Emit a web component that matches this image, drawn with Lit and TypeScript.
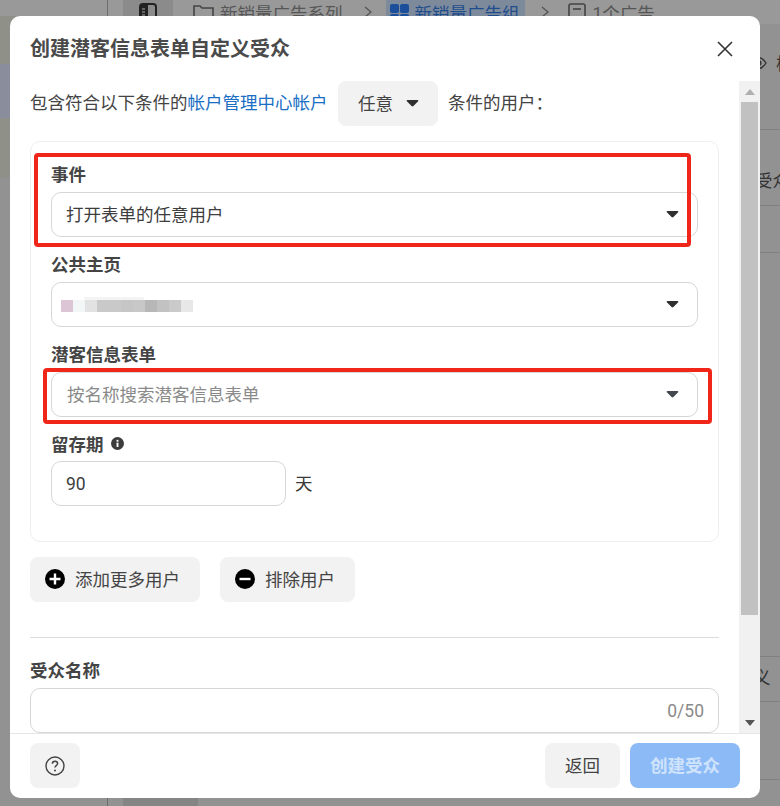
import { LitElement, css, html, svg } from "lit";
import { customElement } from "lit/decorators.js";

// 打码区域的色块（公共主页名称）
const BLUR_CELLS = ["#dcc6d6", "#f3f6f7", "#e2e2e2", "#c9c9c9", "#c9c9c9", "#c6c6c6", "#c8c8c8", "#b7b7b7", "#c2c2c2", "#cacaca", "#e8e8e8"];

const caret = (color = "#333") => html`
  <svg class="caret" width="13" height="8.4" viewBox="0 0 14 9">
    <path d="M1.6 1h10.8c.8 0 1.2.9.7 1.5L8 7.6c-.6.6-1.4.6-2 0L.9 2.5C.4 1.9.8 1 1.6 1z" fill=${color}></path>
  </svg>
`;

const folderIcon = svg`<path d="M1 17V3h6l2 2h11v12" fill="none" stroke="#444" stroke-width="1.6"></path>`;

const chevron = html`
  <svg class="chevron" width="8" height="12" viewBox="0 0 8 12">
    <path d="M1 1l6 5-6 5" fill="none" stroke="#555" stroke-width="1.3"></path>
  </svg>
`;

@customElement("app-root")
export class AppRoot extends LitElement {
  static styles = css`
    :host {
      display: block;
      font-family: Roboto, "Noto Sans CJK SC", sans-serif;
    }

    .page {
      position: relative;
      width: 780px;
      height: 806px;
      overflow: hidden;
      display: flex;
      background: #929292;
      color: #3a3a3a;
      font-size: 17.5px;
    }

    .caret {
      flex: none;
      margin-top: 2px;
    }

    /* 背景页面 */
    .nav {
      width: 107px;
      flex: none;
      border-right: 1px solid #6e6e6e;
      display: flex;
      flex-direction: column;
    }
    .nav-block {
      width: 100%;
    }
    .nav-head { height: 16px; background: #999; }
    .nav-top { height: 48px; background: #8f9188; }
    .nav-blue { height: 54px; background: #8a8d9b; }
    .nav-green { height: 60px; background: #8f9188; }

    .main {
      flex: 1;
      min-width: 0;
      display: flex;
      flex-direction: column;
    }
    .crumbs {
      height: 24px;
      flex: none;
      padding-left: 15px;
      display: flex;
      align-items: center;
      background: #999;
      color: #565656;
      white-space: nowrap;
    }
    .crumb {
      height: 24px;
      display: flex;
      align-items: center;
      gap: 5px;
    }
    .crumb-tab {
      width: 50px;
      justify-content: center;
      background: #8b8b8b;
      margin-right: 20px;
    }
    .chevron {
      flex: none;
      margin-left: 21px;
    }
    .crumb-active {
      background: #7d8a9c;
      color: #1f4d8c;
      padding: 0 5px 0 4px;
      margin-left: 14px;
    }
    .chevron-last {
      margin-left: 16px;
    }
    .crumb-count {
      margin-left: 19px;
      gap: 7px;
    }
    .grid-icon {
      display: grid;
      grid-template-columns: 9px 9px;
      gap: 1px;
      margin-top: 3px;
      margin-right: 1px;
    }
    .grid-icon i {
      height: 9px;
      background: #1b4f9c;
      border-radius: 2px;
    }

    .middle {
      flex: 1;
      min-height: 0;
      display: flex;
      justify-content: flex-end;
    }
    .side {
      width: 30px;
      display: flex;
      flex-direction: column;
      color: #333;
      white-space: nowrap;
      overflow: hidden;
    }
    .side-row {
      flex: none;
      box-sizing: border-box;
      border-bottom: 1px solid #808080;
      display: flex;
      align-items: center;
    }
    .side-a { height: 106px; padding-bottom: 28px; gap: 9px; }
    .side-a svg { flex: none; }
    .side-a span { flex: none; }
    .side-b { height: 76px; padding: 24px 0 0 5px; }
    .side-c { height: 47px; }
    .side-d { height: 404px; }
    .side-e { height: 45px; padding: 0 0 6px 3px; }
    .side-f { height: 78px; }

    .bottom {
      height: 8px;
      flex: none;
      padding-left: 15px;
    }
    .bottom-tab {
      width: 75px;
      height: 100%;
      background: #858585;
    }

    /* 对话框 */
    .modal {
      position: absolute;
      left: 10px;
      top: 16px;
      width: 750px;
      height: 782px;
      background: #fff;
      border-radius: 10px;
      display: flex;
      flex-direction: column;
      overflow: hidden;
    }
    .header {
      height: 65px;
      flex: none;
      padding: 0 27px 0 20px;
      display: flex;
      align-items: center;
      justify-content: space-between;
    }
    .title {
      padding-bottom: 2px;
      font-size: 20px;
      font-weight: 700;
      color: #4a4a4a;
    }
    .body {
      flex: 1;
      min-height: 0;
      display: flex;
    }
    .content {
      flex: 1;
      min-width: 0;
      padding: 0 20px;
      overflow: hidden;
    }
    .intro {
      height: 45px;
      display: flex;
      align-items: center;
      white-space: nowrap;
      color: #444;
    }
    .intro-text {
      margin-bottom: 5px;
    }
    .link {
      color: #1a6fc4;
    }
    .any {
      width: 100px;
      height: 45px;
      margin: 0 10px 0 10.5px;
      padding: 0 19px 3px 20px;
      box-sizing: border-box;
      background: #f2f2f2;
      border-radius: 8px;
      display: flex;
      align-items: center;
      justify-content: space-between;
    }
    .card {
      margin-top: 15px;
      padding: 21px 20px 35px;
      border: 1px solid #eceef0;
      border-radius: 10px;
      display: flex;
      flex-direction: column;
      gap: 16px;
    }
    .label {
      display: flex;
      align-items: center;
      gap: 7px;
      box-sizing: border-box;
      height: 24px;
      padding-bottom: 4px;
      margin-bottom: 5px;
      font-weight: 700;
      color: #444;
    }
    .control {
      height: 45px;
      box-sizing: border-box;
      padding: 0 18px 2px 14px;
      border: 1px solid #d6d6d6;
      border-radius: 10px;
      display: flex;
      align-items: center;
      justify-content: space-between;
      color: #3d3d3d;
    }
    .placeholder {
      margin-left: 1px;
      color: #8a8a8a;
    }
    .blur {
      position: relative;
      display: flex;
      margin: 5px 0 0 -5px;
      height: 12px;
    }
    .blur::before {
      content: "";
      position: absolute;
      left: 23px;
      top: -3px;
      width: 60px;
      height: 3px;
      background: #f4f4f4;
    }
    .blur i {
      width: 12px;
      height: 12px;
    }
    .retention {
      margin-top: -1px;
      display: flex;
      align-items: center;
      gap: 9px;
    }
    .retention .control {
      width: 235px;
      padding-bottom: 0;
    }
    .retention span {
      margin-bottom: 2px;
    }
    .actions {
      margin-top: 15px;
      display: flex;
      gap: 20px;
    }
    .btn {
      height: 45px;
      box-sizing: border-box;
      padding-bottom: 2px;
      background: #f2f2f2;
      border-radius: 8px;
      display: flex;
      align-items: center;
      justify-content: center;
      color: #444;
    }
    .btn-icon {
      padding: 0 20px 2px 15px;
      gap: 10px;
    }
    .divider {
      margin-top: 35px;
      height: 1px;
      background: #dcdcdc;
    }
    .name-field {
      margin-top: 21px;
    }
    .name-input {
      justify-content: flex-end;
      padding: 0 14px 0 0;
      color: #8a8a8a;
    }

    .scrollbar {
      width: 21px;
      flex: none;
      background: #f1f1f1;
      display: flex;
      flex-direction: column;
      align-items: center;
    }
    .scroll-up, .scroll-down {
      height: 21px;
      flex: none;
      display: flex;
      align-items: center;
      justify-content: center;
    }
    .thumb {
      width: 17px;
      height: 513px;
      flex: none;
      background: #c1c1c1;
    }
    .track {
      flex: 1;
    }

    .footer {
      height: 65px;
      flex: none;
      box-sizing: border-box;
      padding: 9px 20px 10px;
      border-top: 1px solid #e6e6e6;
      display: flex;
      align-items: center;
      gap: 10px;
    }
    .help {
      width: 50px;
      margin-right: auto;
      padding-bottom: 0;
    }
    .back {
      width: 75px;
    }
    .create {
      width: 110px;
      background: #8cbaf7;
      color: #cfe3fb;
      font-weight: 700;
    }

    /* 截图上的红色标注框 */
    .mark {
      position: absolute;
      box-sizing: border-box;
      border: 4px solid #f0261b;
      border-radius: 4px;
      pointer-events: none;
    }
    .mark-a { left: 24px; top: 137px; width: 657px; height: 94px; }
    .mark-b { left: 33px; top: 352px; width: 669px; height: 56px; }
  `;

  private renderSelect(content: unknown, caretColor = "#2f2f2f") {
    return html`<div class="control">${content}${caret(caretColor)}</div>`;
  }

  render() {
    return html`
      <div class="page">
        <div class="nav">
          <div class="nav-block nav-head"></div>
          <div class="nav-block nav-top"></div>
          <div class="nav-block nav-blue"></div>
          <div class="nav-block nav-green"></div>
        </div>
        <div class="main">
          <div class="crumbs">
            <div class="crumb crumb-tab">
              <svg width="20" height="22" viewBox="0 0 20 22">
                <rect x="2" y="3" width="16" height="17" rx="3" fill="none" stroke="#222" stroke-width="2"></rect>
                <rect x="2" y="3" width="8" height="17" fill="#222"></rect>
                <path d="M4 8h3M4 11h3M4 14h3" stroke="#aaa" stroke-width="1.2"></path>
              </svg>
            </div>
            <div class="crumb">
              <svg width="22" height="18" viewBox="0 0 22 18">${folderIcon}</svg>
              新销量广告系列
            </div>
            ${chevron}
            <div class="crumb crumb-active">
              <span class="grid-icon"><i></i><i></i><i></i><i></i></span>
              新销量广告组
            </div>
            <svg class="chevron chevron-last" width="8" height="12" viewBox="0 0 8 12">
              <path d="M1 1l6 5-6 5" fill="none" stroke="#555" stroke-width="1.3"></path>
            </svg>
            <div class="crumb crumb-count">
              <svg width="18" height="18" viewBox="0 0 18 18">
                <rect x="1" y="1" width="16" height="16" rx="2" fill="none" stroke="#444" stroke-width="1.6"></rect>
                <path d="M5 6h8" stroke="#444" stroke-width="1.6"></path>
              </svg>
              1个广告
            </div>
          </div>
          <div class="middle">
            <div class="side">
              <div class="side-row side-a">
                <svg width="17" height="14" viewBox="0 0 17 14">
                  <path d="M1 7c3-4 5-5.500 7.500-5.500S13.500 3 16 7c-2.500 4-5 5.500-7.500 5.500S4 11 1 7z" fill="none" stroke="#333" stroke-width="1.4"></path>
                  <circle cx="8.500" cy="7" r="3" fill="#333"></circle>
                </svg>
                <span>桧</span>
              </div>
              <div class="side-row side-b">受众</div>
              <div class="side-row side-c"></div>
              <div class="side-row side-d"></div>
              <div class="side-row side-e">义</div>
              <div class="side-row side-f"></div>
            </div>
          </div>
          <div class="bottom"><div class="bottom-tab"></div></div>
        </div>

        <div class="modal">
          <div class="header">
            <div class="title">创建潜客信息表单自定义受众</div>
            <svg width="16" height="16" viewBox="0 0 16 16">
              <path d="M1 1l14 14M15 1L1 15" stroke="#333" stroke-width="1.6" fill="none"></path>
            </svg>
          </div>

          <div class="body">
            <div class="content">
              <div class="intro">
                <span class="intro-text">包含符合以下条件的<span class="link">帐户管理中心帐户</span></span>
                <div class="any">任意${caret("#2f2f2f")}</div>
                <span class="intro-text">条件的用户：</span>
              </div>

              <div class="card">
                <div>
                  <div class="label">事件</div>
                  ${this.renderSelect(html`打开表单的任意用户`)}
                </div>
                <div>
                  <div class="label">公共主页</div>
                  ${this.renderSelect(html`
                    <span class="blur">
                      ${BLUR_CELLS.map((c) => html`<i style="background:${c}"></i>`)}
                    </span>
                  `)}
                </div>
                <div>
                  <div class="label">潜客信息表单</div>
                  ${this.renderSelect(html`<span class="placeholder">按名称搜索潜客信息表单</span>`, "#444650")}
                </div>
                <div>
                  <div class="label">
                    留存期
                    <svg width="13" height="13" viewBox="0 0 15 15">
                      <circle cx="7.500" cy="7.500" r="7.500" fill="#3c3c3c"></circle>
                      <rect x="6.400" y="6.500" width="2.200" height="5" fill="#fff"></rect>
                      <rect x="6.400" y="3.300" width="2.200" height="2.100" fill="#fff"></rect>
                    </svg>
                  </div>
                  <div class="retention">
                    <div class="control">90</div>
                    <span>天</span>
                  </div>
                </div>
              </div>

              <div class="actions">
                <div class="btn btn-icon">
                  <svg width="20" height="20" viewBox="0 0 20 20">
                    <circle cx="10" cy="10" r="10" fill="#000"></circle>
                    <path d="M10 4.500v11M4.500 10h11" stroke="#fff" stroke-width="2.400"></path>
                  </svg>
                  添加更多用户
                </div>
                <div class="btn btn-icon">
                  <svg width="20" height="20" viewBox="0 0 20 20">
                    <circle cx="10" cy="10" r="10" fill="#000"></circle>
                    <path d="M4.500 10h11" stroke="#fff" stroke-width="2.400"></path>
                  </svg>
                  排除用户
                </div>
              </div>

              <div class="divider"></div>

              <div class="name-field">
                <div class="label">受众名称</div>
                <div class="control name-input">0/50</div>
              </div>
            </div>

            <div class="scrollbar">
              <div class="scroll-up">
                <svg width="10" height="6" viewBox="0 0 10 6"><path d="M5 0l5 6H0z" fill="#b0b0b0"></path></svg>
              </div>
              <div class="thumb"></div>
              <div class="track"></div>
              <div class="scroll-down">
                <svg width="10" height="6" viewBox="0 0 10 6"><path d="M0 0h10L5 6z" fill="#555"></path></svg>
              </div>
            </div>
          </div>

          <div class="footer">
            <div class="btn help">
              <svg width="20" height="20" viewBox="0 0 20 20">
                <circle cx="10" cy="10" r="9" fill="none" stroke="#444" stroke-width="1.400"></circle>
                <path d="M7.400 7.800c0-1.500 1.100-2.500 2.600-2.500s2.600 1 2.600 2.300c0 2-2.600 2-2.600 4" fill="none" stroke="#444" stroke-width="1.500"></path>
                <circle cx="10" cy="14.600" r="1" fill="#444"></circle>
              </svg>
            </div>
            <div class="btn back">返回</div>
            <div class="btn create">创建受众</div>
          </div>

          <div class="mark mark-a"></div>
          <div class="mark mark-b"></div>
        </div>
      </div>
    `;
  }
}
